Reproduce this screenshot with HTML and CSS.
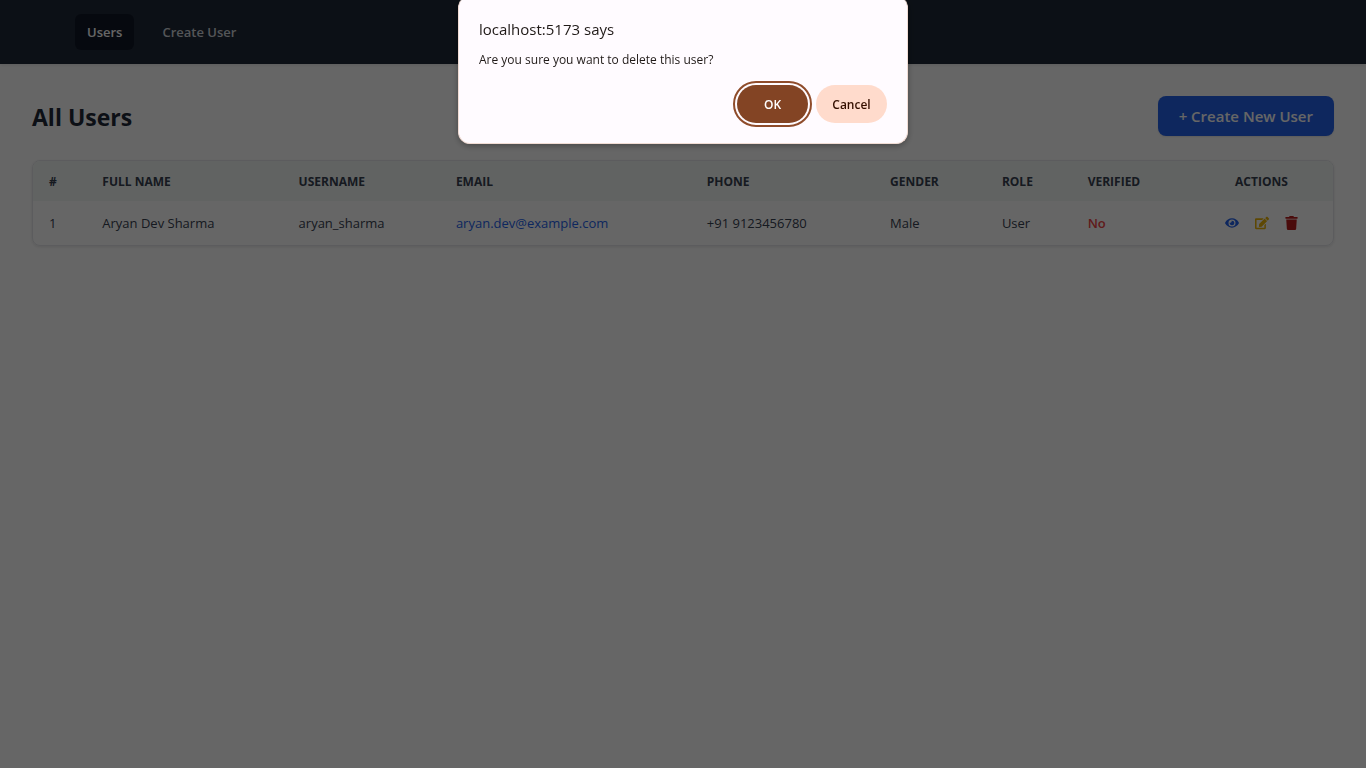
FILE: index.html
```html
<!DOCTYPE html>
<html lang="en">
<head>
<meta charset="utf-8">
<meta name="viewport" content="width=device-width, initial-scale=1">
<title>All Users</title>
<link rel="stylesheet" href="styles.css">
</head>
<body>
<nav class="navbar">
  <a class="nav-link nav-link-active" href="#users">Users</a>
  <a class="nav-link" href="#create">Create User</a>
</nav>
<main class="page">
  <header class="page-header">
    <h1 class="page-title">All Users</h1>
    <button class="create-button" type="button">+ Create New User</button>
  </header>
  <div class="table-card">
    <table class="users">
      <colgroup>
        <col class="col-index"><col class="col-name"><col class="col-username"><col class="col-email"><col class="col-phone"><col class="col-gender"><col class="col-role"><col class="col-verified"><col class="col-actions">
      </colgroup>
      <thead>
        <tr><th>#</th><th>FULL NAME</th><th>USERNAME</th><th>EMAIL</th><th>PHONE</th><th>GENDER</th><th>ROLE</th><th>VERIFIED</th><th class="center">ACTIONS</th></tr>
      </thead>
      <tbody>
        <tr>
          <td>1</td>
          <td>Aryan Dev Sharma</td>
          <td>aryan_sharma</td>
          <td><a class="email" href="mailto:aryan.dev@example.com">aryan.dev@example.com</a></td>
          <td>+91 9123456780</td>
          <td>Male</td>
          <td>User</td>
          <td><span class="unverified">No</span></td>
          <td>
            <div class="actions">
              <button class="action view" type="button" aria-label="View user"><svg class="icon" viewBox="0 0 576 512" fill="currentColor"><path d="M572.5 241.400C518.300 135.600 410.900 64 288 64S57.700 135.600 3.500 241.400a32.400 32.400 0 0 0 0 29.200C57.700 376.400 165.100 448 288 448s230.300-71.600 284.500-177.400a32.400 32.400 0 0 0 0-29.200zM288 400a144 144 0 1 1 144-144 143.900 143.900 0 0 1-144 144zm0-240a95.300 95.300 0 0 0-25.300 3.800 47.900 47.900 0 0 1-66.900 66.900A95.800 95.800 0 1 0 288 160z"/></svg></button>
              <button class="action edit" type="button" aria-label="Edit user"><svg class="icon" viewBox="0 0 576 512" fill="currentColor"><path d="M402.600 83.200l90.200 90.200c3.800 3.800 3.800 10 0 13.800L274.400 405.600l-92.800 10.300c-12.400 1.400-22.900-9.100-21.500-21.500l10.300-92.800L388.800 83.200c3.800-3.800 10-3.800 13.800 0zm162-22.900l-48.800-48.800c-15.200-15.200-39.900-15.200-55.200 0l-35.400 35.400c-3.800 3.800-3.800 10 0 13.800l90.200 90.200c3.800 3.800 10 3.800 13.800 0l35.400-35.400c15.200-15.300 15.200-40 0-55.200zM384 346.200V448H64V128h229.800c3.200 0 6.200-1.300 8.500-3.500l40-40c7.600-7.600 2.200-20.500-8.500-20.500H48C21.500 64 0 85.500 0 112v352c0 26.500 21.500 48 48 48h352c26.500 0 48-21.500 48-48V306.200c0-10.700-12.900-16-20.500-8.500l-40 40c-2.200 2.300-3.500 5.300-3.500 8.500z"/></svg></button>
              <button class="action delete" type="button" aria-label="Delete user"><svg class="icon icon-trash" viewBox="0 0 448 512" fill="currentColor"><path d="M432 32H312l-9.400-18.700A24 24 0 0 0 281.100 0H166.800a23.700 23.700 0 0 0-21.400 13.300L136 32H16A16 16 0 0 0 0 48v32a16 16 0 0 0 16 16h416a16 16 0 0 0 16-16V48a16 16 0 0 0-16-16zM53.200 467a48 48 0 0 0 47.900 45h245.800a48 48 0 0 0 47.900-45L416 128H32z"/></svg></button>
            </div>
          </td>
        </tr>
      </tbody>
    </table>
  </div>
</main>
<div class="scrim">
  <dialog class="confirm" open aria-labelledby="confirm-title">
    <h2 class="confirm-title" id="confirm-title">localhost:5173 says</h2>
    <p class="confirm-text">Are you sure you want to delete this user?</p>
    <div class="confirm-buttons">
      <button class="pill pill-ok" type="button">OK</button>
      <button class="pill pill-cancel" type="button">Cancel</button>
    </div>
  </dialog>
</div>
</body>
</html>
```
FILE: styles.css
```css
* { box-sizing: border-box; }

body {
  margin: 0;
  background: #ffffff;
  color: #1f2937;
  font-family: "Segoe UI", "Open Sans", "Noto Sans", sans-serif;
  font-size: 13px;
  line-height: 20px;
}

button { font-family: inherit; border: 0; cursor: pointer; }

.navbar {
  display: flex;
  align-items: center;
  gap: 16px;
  height: 64px;
  padding: 0 75px;
  background: #1f2937;
  box-shadow: 0 1px 3px rgba(0, 0, 0, 0.1);
}

.nav-link {
  padding: 8px 12px;
  border-radius: 6px;
  color: #d1d5db;
  font-weight: 600;
  text-decoration: none;
}

.nav-link-active { background: #111827; color: #ffffff; }

.page { padding: 32px; }

.page-header {
  display: flex;
  align-items: center;
  justify-content: space-between;
  margin-bottom: 24px;
}

.page-title { margin: 0; padding-top: 2px; font-size: 23px; line-height: 32px; font-weight: 700; }

.create-button {
  padding: 8px 21px;
  border-radius: 8px;
  background: #2563eb;
  color: #ffffff;
  font-size: 15px;
  line-height: 24px;
  font-weight: 600;
  box-shadow: 0 1px 2px rgba(0, 0, 0, 0.1);
}

.table-card {
  overflow: hidden;
  border: 1px solid #e5e7eb;
  border-radius: 8px;
  box-shadow: 0 1px 3px rgba(0, 0, 0, 0.1);
}

.users { width: 100%; table-layout: fixed; border-collapse: collapse; }
.users th, .users td { padding: 12px 16px; text-align: left; white-space: nowrap; }
.users th { padding: 11px 16px 9px; background: #f3f7f5; color: #374151; font-size: 12px; font-weight: 700; }
.users td { color: #374151; }
.users .center { text-align: center; }

.col-index { width: 4.1%; }
.col-name { width: 15.1%; }
.col-username { width: 12.1%; }
.col-email { width: 19.3%; }
.col-phone { width: 14.1%; }
.col-gender { width: 8.6%; }
.col-role { width: 6.6%; }
.col-verified { width: 9.1%; }
.col-actions { width: 11%; }

.email { color: #2563eb; text-decoration: none; }
.unverified { color: #ef4444; font-weight: 600; }

.actions { display: flex; align-items: center; justify-content: center; gap: 16px; }
.action { display: flex; padding: 0; background: transparent; }
.icon { display: block; width: 14px; height: 14px; }
.icon-trash { width: 13px; }
.view { color: #2563eb; }
.edit { color: #eab308; }
.delete { color: #b91c1c; }

.scrim {
  position: fixed;
  inset: 0;
  background: rgba(0, 0, 0, 0.6);
}

.confirm {
  position: absolute;
  top: -4px;
  width: 450px;
  margin: 0 auto;
  padding: 23px 20px 20px;
  border: 1px solid #f1dcd4;
  border-top: 0;
  border-radius: 12px;
  background: #fffbff;
  color: #201a18;
  box-shadow: 0 2px 6px rgba(0, 0, 0, 0.3);
}

.confirm-title { margin: 0 0 11px; font-size: 15px; line-height: 20px; font-weight: 500; }
.confirm-text { margin: 0 0 15px; font-size: 12px; line-height: 20px; }

.confirm-buttons { display: flex; justify-content: flex-end; gap: 8px; }

.pill {
  min-width: 71px;
  height: 38px;
  padding: 0 16px;
  border-radius: 19px;
  font-size: 12px;
  font-weight: 600;
}

.pill-ok {
  background: #834424;
  color: #ffffff;
  outline: 2px solid #8f4c2b;
  outline-offset: 2px;
}

.pill-cancel { background: #ffdbcc; color: #351000; }
```
